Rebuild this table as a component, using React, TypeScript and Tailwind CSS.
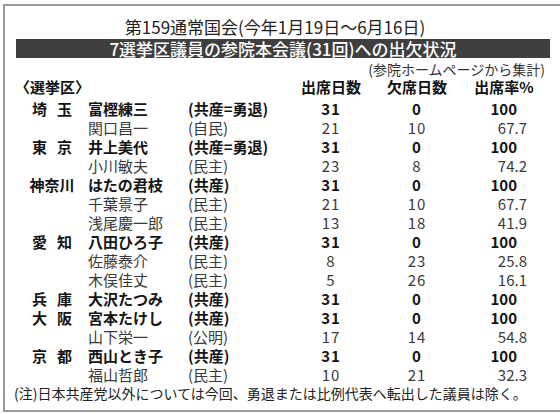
type Row = {
  pref?: string;
  name: string;
  party: string;
  present: string;
  absent: string;
  rate: string;
  bold?: boolean;
};

const rows: Row[] = [
  { pref: "埼玉", name: "富樫練三", party: "(共産=勇退)", present: "31", absent: "0", rate: "100", bold: true },
  { name: "関口昌一", party: "(自民)", present: "21", absent: "10", rate: "67.7" },
  { pref: "東京", name: "井上美代", party: "(共産=勇退)", present: "31", absent: "0", rate: "100", bold: true },
  { name: "小川敏夫", party: "(民主)", present: "23", absent: "8", rate: "74.2" },
  { pref: "神奈川", name: "はたの君枝", party: "(共産)", present: "31", absent: "0", rate: "100", bold: true },
  { name: "千葉景子", party: "(民主)", present: "21", absent: "10", rate: "67.7" },
  { name: "浅尾慶一郎", party: "(民主)", present: "13", absent: "18", rate: "41.9" },
  { pref: "愛知", name: "八田ひろ子", party: "(共産)", present: "31", absent: "0", rate: "100", bold: true },
  { name: "佐藤泰介", party: "(民主)", present: "8", absent: "23", rate: "25.8" },
  { name: "木俣佳丈", party: "(民主)", present: "5", absent: "26", rate: "16.1" },
  { pref: "兵庫", name: "大沢たつみ", party: "(共産)", present: "31", absent: "0", rate: "100", bold: true },
  { pref: "大阪", name: "宮本たけし", party: "(共産)", present: "31", absent: "0", rate: "100", bold: true },
  { name: "山下栄一", party: "(公明)", present: "17", absent: "14", rate: "54.8" },
  { pref: "京都", name: "西山とき子", party: "(共産)", present: "31", absent: "0", rate: "100", bold: true },
  { name: "福山哲郎", party: "(民主)", present: "10", absent: "21", rate: "32.3" },
];

function Pref({ text }: { text?: string }) {
  if (!text) return null;
  // two-character prefectures are spread out to the width of three
  if (text.length === 2) {
    return (
      <span className="flex justify-center gap-[10px]">
        <span>{text[0]}</span>
        <span>{text[1]}</span>
      </span>
    );
  }
  return <span>{text}</span>;
}

export default function App() {
  return (
    <div className="h-[414px] w-[560px] overflow-hidden bg-white pl-[3px] pt-[4px] font-['Noto_Sans_CJK_JP',sans-serif]">
      <div className="h-[408px] w-[600px] border-b-2 border-l-2 border-t-2 border-[#9a9a9a]">
        <div className="w-[540px] pt-[10px] text-center text-[17px] leading-[22px] text-[#222]">
          第159通常国会(今年1月19日～6月16日)
        </div>
        <div className="ml-[11px] mt-[1px] flex h-[19px] w-[534px] items-center justify-center bg-[#3f3f3f] text-[17px] font-medium leading-[19px] text-white">
          7選挙区議員の参院本会議(31回)への出欠状況
        </div>
        <div className="mt-[3px] w-[540px] text-right text-[14px] leading-[17px] text-[#333]">
          (参院ホームページから集計)
        </div>
        <div className="flex h-[18px] items-center text-[15px] font-bold leading-[18px] text-[#111]">
          <div className="w-[295px] pl-[10px]">〈選挙区〉</div>
          <div className="w-[62px] text-center">出席日数</div>
          <div className="ml-[24px] w-[62px] text-center">欠席日数</div>
          <div className="ml-[26px] w-[60px] text-center">出席率%</div>
        </div>
        <div className="mt-[3px] pl-[17px]">
          {rows.map((r, i) => (
            <div
              key={i}
              className={
                r.bold
                  ? "flex h-[19px] items-center text-[15px] font-bold leading-[19px] text-[#141414]"
                  : "flex h-[19px] items-center text-[15px] font-normal leading-[19px] text-[#3a3a3a]"
              }
            >
              <div className="w-[60px] text-center">
                <Pref text={r.pref} />
              </div>
              <div className="w-[106px] pl-[6px] whitespace-nowrap">{r.name}</div>
              <div className="w-[113px] whitespace-nowrap">{r.party}</div>
              <div className="w-[60px] text-center tracking-[1px]">{r.present}</div>
              <div className="ml-[26px] w-[60px] text-center tracking-[1px]">{r.absent}</div>
              <div className={r.bold ? "w-[80px] pr-[10px] text-right" : "w-[80px] text-right"}>
                {r.rate}
              </div>
            </div>
          ))}
        </div>
        <div className="mt-[1px] pl-[9px] text-[14px] leading-[16px] text-[#222] whitespace-nowrap">
          (注)日本共産党以外については今回、勇退または比例代表へ転出した議員は除く。
        </div>
      </div>
    </div>
  );
}
